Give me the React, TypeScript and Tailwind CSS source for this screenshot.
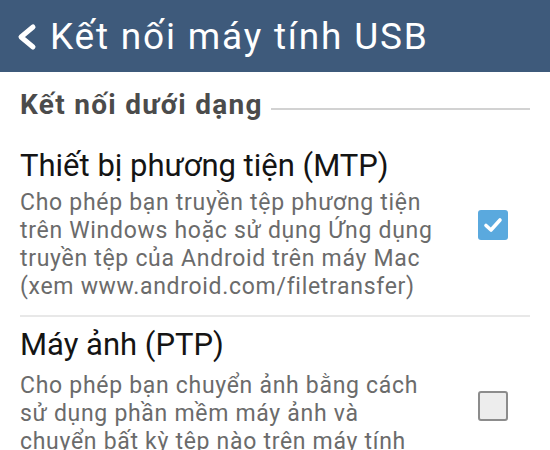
import { ReactNode } from 'react';

interface OptionRowProps {
  title: string;
  lines: string[];
  checked?: boolean;
  descClassName?: string;
  children?: ReactNode;
}

function CheckBox({ checked }: { checked?: boolean }) {
  if (checked) {
    return (
      <div className="flex h-[30px] w-[30px] items-center justify-center rounded-[3px] bg-[#5aa9de]">
        <svg width="22" height="22" viewBox="0 0 22 22" fill="none">
          <polyline
            points="4,11.5 9,16 18,6"
            stroke="white"
            strokeWidth="3.6"
            strokeLinecap="round"
            strokeLinejoin="round"
          />
        </svg>
      </div>
    );
  }
  return (
    <div className="h-[30px] w-[30px] rounded-[3px] border-2 border-[#8c8c8c] bg-[#ededed]" />
  );
}

function OptionRow({ title, lines, checked, descClassName = 'mt-[5px]' }: OptionRowProps) {
  return (
    <div className="flex items-center">
      <div className="min-w-0 flex-1">
        <div className="text-[31px] leading-[36px] text-[#141414]">{title}</div>
        <div className={`${descClassName} text-[23px] leading-[28px] tracking-[0.7px] text-[#6b6b6b]`}>
          {lines.map((line) => (
            <div key={line} className="whitespace-nowrap">
              {line}
            </div>
          ))}
        </div>
      </div>
      <div className="mr-[22px] shrink-0">
        <CheckBox checked={checked} />
      </div>
    </div>
  );
}

export default function App() {
  return (
    <div
      className="h-[450px] w-[550px] overflow-hidden bg-white"
      style={{ fontFamily: 'Roboto, "Noto Sans", sans-serif' }}
    >
      {/* Action bar */}
      <div className="flex h-[72px] items-center bg-[#3e5a7b] pl-[14px]">
        <svg width="24" height="30" viewBox="0 0 24 30" fill="none" className="shrink-0">
          <polyline
            points="19,6 7,16 19,26"
            stroke="white"
            strokeWidth="5"
            strokeLinecap="round"
            strokeLinejoin="round"
          />
        </svg>
        <h1 className="ml-[12px] text-[37px] leading-none tracking-[1.8px] text-white">
          Kết nối máy tính USB
        </h1>
      </div>

      <div className="px-5 pt-[18px]">
        {/* Section header */}
        <div className="flex items-center">
          <h2 className="text-[28px] font-bold leading-[30px] tracking-[1.3px] text-[#4b4b4b]">
            Kết nối dưới dạng
          </h2>
          <div className="ml-[8px] mt-[7px] h-[2px] flex-1 bg-[#d2d2d2]" />
        </div>

        <div className="pt-[28px] pb-[14px]">
          <OptionRow
            title="Thiết bị phương tiện (MTP)"
            checked
            lines={[
              'Cho phép bạn truyền tệp phương tiện',
              'trên Windows hoặc sử dụng Ứng dụng',
              'truyền tệp của Android trên máy Mac',
              '(xem www.android.com/filetransfer)',
            ]}
          />
        </div>

        <div className="h-[2px] bg-[#e8e8e8]" />

        <div className="pt-[10px]">
          <OptionRow
            title="Máy ảnh (PTP)"
            descClassName="mt-[9px]"
            lines={[
              'Cho phép bạn chuyển ảnh bằng cách',
              'sử dụng phần mềm máy ảnh và',
              'chuyển bất kỳ tệp nào trên máy tính',
              'không hỗ trợ MTP',
            ]}
          />
        </div>
      </div>
    </div>
  );
}
